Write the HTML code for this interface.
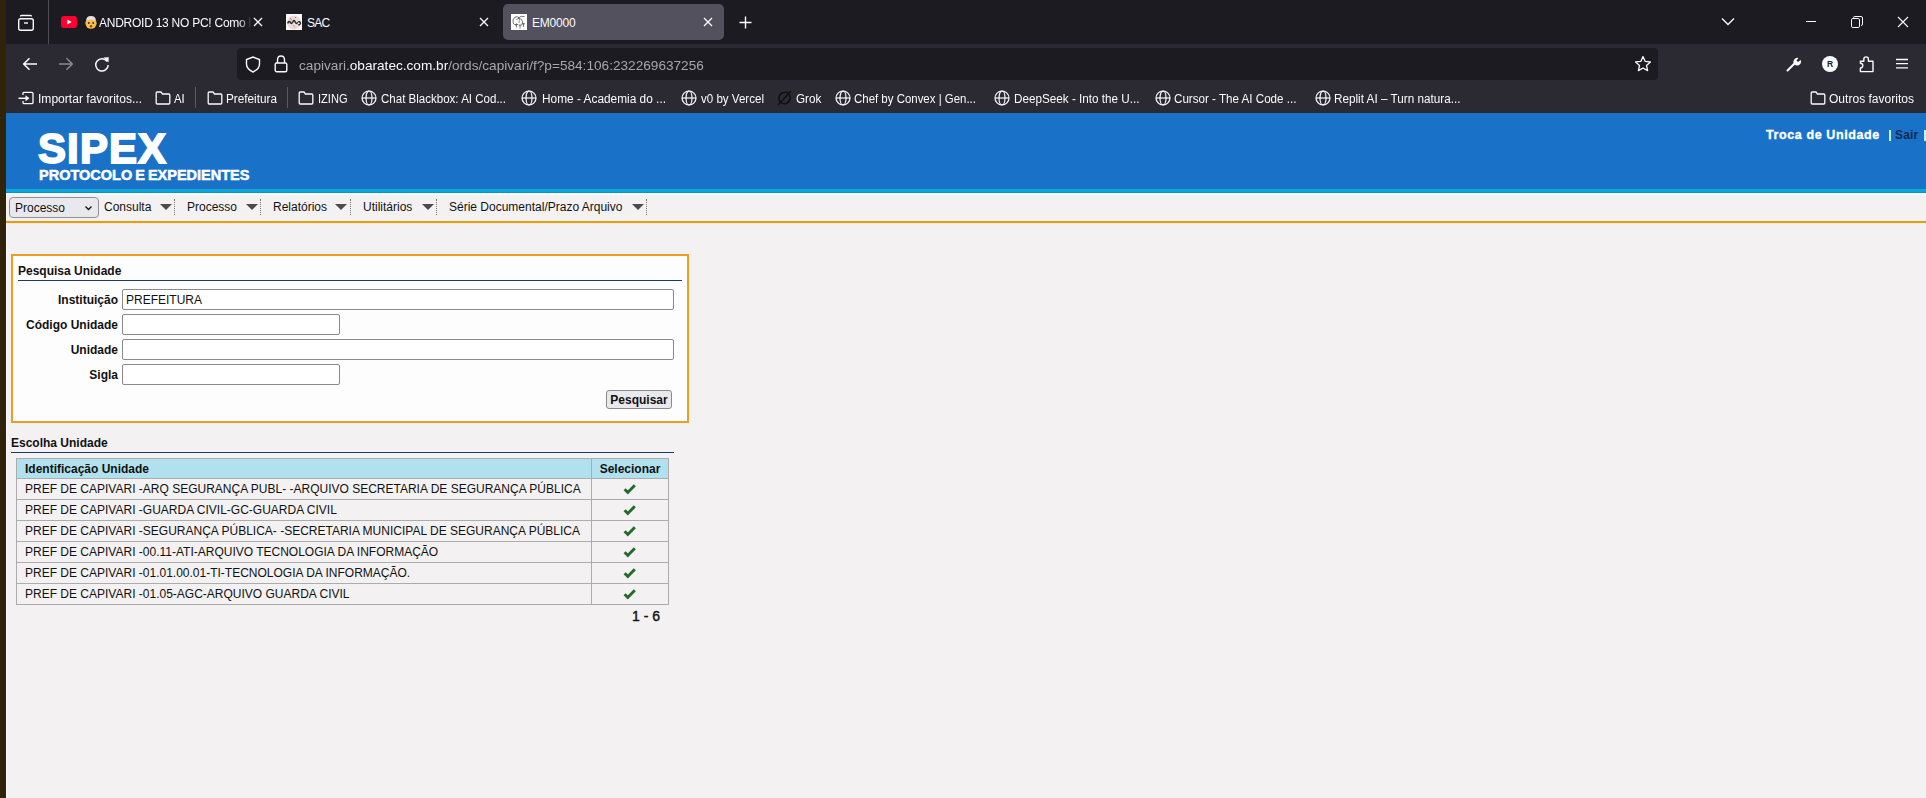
<!DOCTYPE html>
<html><head><meta charset="utf-8">
<style>
*{margin:0;padding:0;box-sizing:border-box}
html,body{width:1926px;height:798px;overflow:hidden;background:#f4f1f2;font-family:"Liberation Sans",sans-serif}
.a{position:absolute}
#lb{left:0;top:0;width:6px;height:798px;background:#2f240a}
#wl{left:6px;top:223px;width:1px;height:575px;background:#fcfcff}
#tabbar{left:6px;top:0;width:1920px;height:44px;background:#1c1b22}
#toolbar{left:6px;top:44px;width:1920px;height:40px;background:#2b2a33}
#bmbar{left:6px;top:84px;width:1920px;height:29px;background:#2b2a33}
.wt{color:#fbfbfe;font-size:13px;white-space:nowrap}
#url{left:237px;top:48px;width:1421px;height:32px;background:#1c1b22;border-radius:4px}
#hdr{left:6px;top:113px;width:1920px;height:76px;background:#1a72c8}
#cyan{left:6px;top:189px;width:1920px;height:4px;background:#0ba6da;border-bottom:1px solid #0c93bd}
#menu{left:6px;top:193px;width:1920px;height:28px;background:#f4f1f2;border-top:2px solid #f8fbfd}
#orange{left:6px;top:221px;width:1920px;height:2px;background:#d99d30;box-shadow:0 -1px 0 #fbeec6,0 1px 0 #fbeec6}
.mi{font-size:12px;color:#111;top:200px}
.tri{width:0;height:0;border-left:6px solid transparent;border-right:6px solid transparent;border-top:6px solid #4b4b4b;top:204px}
.dsep{width:0;border-left:1px dotted #777;top:199px;height:16px}
#box{left:11px;top:254px;width:678px;height:169px;border:2px solid #e99f26;background:#fdfdfd}
.lbl{font-size:12px;font-weight:bold;color:#111;text-align:right;white-space:nowrap}
.inp{border:1px solid #8a8a8a;border-radius:2px;background:#fff;height:21px}
.bl{height:1px;background:#1d3b5e}
table{border-collapse:collapse}
#tbl{left:16px;top:458px;width:653px}
#tbl td,#tbl th{border:1px solid #acacac;font-size:12px;height:21px;padding:0 0 0 8px;text-align:left;color:#111;white-space:nowrap}
#tbl th{background:#b1e1ee;font-weight:bold;height:20px}
#tbl td.c,#tbl th.c{text-align:center;padding:0;width:77px}
</style></head><body>
<div id="lb" class="a"></div>
<div id="tabbar" class="a"></div>
<div id="toolbar" class="a"></div>
<div id="bmbar" class="a"></div>
<div id="url" class="a"></div>

<!-- TAB BAR -->
<svg class="a" style="left:15px;top:13px" width="22" height="20" viewBox="0 0 22 20"><g fill="none" stroke="#fbfbfe" stroke-width="1.4"><path d="M5.5 3.5 Q5.5 2.5 6.5 2.5 H15.5 Q16.5 2.5 16.5 3.5"/><rect x="3.7" y="5.7" width="14.6" height="11.6" rx="2"/><path d="M9 10 H13"/></g></svg>
<div class="a" style="left:48px;top:0;width:1px;height:44px;background:#4e4d55"></div>
<svg class="a" style="left:61px;top:16px" width="16" height="12" viewBox="0 0 16 12"><rect width="16" height="12" rx="3" fill="#ff0033"/><path d="M6.3 3.5 L10.7 6 L6.3 8.5Z" fill="#fff"/></svg>
<svg class="a" style="left:84px;top:15px" width="14" height="14" viewBox="0 0 14 14"><circle cx="7" cy="8.2" r="5.6" fill="#f4c247"/><path d="M2.3 5.5 Q2 1 7 1 Q12 1 11.7 5.5 Q7 4.2 2.3 5.5Z" fill="#e8dce6"/><circle cx="4.8" cy="8" r="0.9" fill="#3a2410"/><circle cx="9.2" cy="8" r="0.9" fill="#3a2410"/><ellipse cx="7" cy="11.2" rx="1.2" ry="1.3" fill="#b8283a"/></svg>
<div class="a wt" style="left:99px;top:15px;font-size:12px;line-height:16px;letter-spacing:-0.25px;width:153px;overflow:hidden;-webkit-mask-image:linear-gradient(to right,#000 140px,transparent 153px)">ANDROID 13 NO PC! Como instalar</div>
<div class="a" style="left:249px;top:17px;width:1px;height:10px;background:#3a3940"></div>
<svg class="a" style="left:253px;top:17px" width="10" height="10" viewBox="0 0 10 10"><path d="M1 1 L9 9 M9 1 L1 9" stroke="#fbfbfe" stroke-width="1.3"/></svg>
<svg class="a" style="left:286px;top:14px" width="16" height="16" viewBox="0 0 16 16"><rect width="16" height="16" fill="#fafafa"/><circle cx="8" cy="8.5" r="7" fill="#ecdcdc"/><path d="M4 4 L6 6.5 M9 3 L10 4" stroke="#d06060" stroke-width="1"/><path d="M7 11 L9 13.5" stroke="#e8b0a0" stroke-width="1.5"/><path d="M1.8 9.5 Q2.5 6.5 4.3 8 Q5.3 10.8 6.8 8 Q8 4.8 9.2 8 Q10.3 10.5 12 8.5 Q13.5 6.8 14.4 9.2 Q13.5 11.5 12 10.5" fill="none" stroke="#262626" stroke-width="1.5"/><circle cx="12.6" cy="9.3" r="0.9" fill="#fff"/></svg>
<div class="a wt" style="left:307px;top:15px;font-size:12px;line-height:16px;letter-spacing:-0.8px">SAC</div>
<svg class="a" style="left:479px;top:17px" width="10" height="10" viewBox="0 0 10 10"><path d="M1 1 L9 9 M9 1 L1 9" stroke="#fbfbfe" stroke-width="1.3"/></svg>
<div class="a" style="left:503px;top:4px;width:221px;height:36px;background:#52515d;border-radius:5px"></div>
<svg class="a" style="left:511px;top:14px" width="16" height="16" viewBox="0 0 16 16"><rect width="16" height="16" fill="#fff"/><g fill="none" stroke="#555" stroke-width="0.8"><path d="M8.5 4 Q6 1.5 3.5 3.5 Q1.2 5.5 2.2 9 Q3 11 5.5 11.3"/><path d="M5.5 5.5 Q8 3 10.5 5.5 Q12.5 8 11 10.5 Q9.5 12 7.5 11"/><path d="M7 4 Q10 1.5 13.5 2.5"/><path d="M5.5 9.5 V13.5 M9 10.5 V14.5 M12.5 9 V13 M4 10.5 H7 M11 9.8 H14"/></g><path d="M8.5 5 L8 9" stroke="#999" stroke-width="1"/></svg>
<div class="a wt" style="left:532px;top:15px;font-size:12px;line-height:16px;letter-spacing:-0.2px">EM0000</div>
<svg class="a" style="left:703px;top:17px" width="10" height="10" viewBox="0 0 10 10"><path d="M1 1 L9 9 M9 1 L1 9" stroke="#fbfbfe" stroke-width="1.3"/></svg>
<svg class="a" style="left:739px;top:16px" width="13" height="13" viewBox="0 0 13 13"><path d="M6.5 0.5 V12.5 M0.5 6.5 H12.5" stroke="#fbfbfe" stroke-width="1.4"/></svg>
<svg class="a" style="left:1721px;top:17px" width="14" height="9" viewBox="0 0 14 9"><path d="M1 1.5 L7 7.5 L13 1.5" fill="none" stroke="#fbfbfe" stroke-width="1.3"/></svg>
<div class="a" style="left:1806px;top:21px;width:10px;height:1px;background:#fbfbfe"></div>
<svg class="a" style="left:1851px;top:16px" width="12" height="12" viewBox="0 0 12 12"><g fill="none" stroke="#fbfbfe" stroke-width="1"><rect x="0.5" y="2.5" width="8" height="9" rx="1.3"/><path d="M2.5 1.8 Q2.5 0.5 3.8 0.5 H10 Q11.5 0.5 11.5 2 V8 Q11.5 9.5 10.2 9.5"/></g></svg>
<svg class="a" style="left:1897px;top:16px" width="12" height="12" viewBox="0 0 12 12"><path d="M1 1 L11 11 M11 1 L1 11" stroke="#fbfbfe" stroke-width="1.1"/></svg>

<!-- TOOLBAR -->
<svg class="a" style="left:22px;top:57px" width="16" height="14" viewBox="0 0 16 14"><path d="M15 7 H2 M7.5 1.2 L1.7 7 L7.5 12.8" fill="none" stroke="#fbfbfe" stroke-width="1.5"/></svg>
<svg class="a" style="left:58px;top:57px" width="16" height="14" viewBox="0 0 16 14"><path d="M1 7 H14 M8.5 1.2 L14.3 7 L8.5 12.8" fill="none" stroke="#8a898f" stroke-width="1.5"/></svg>
<svg class="a" style="left:94px;top:56px" width="16" height="16" viewBox="0 0 16 16"><path d="M13.2 5.5 A6.2 6.2 0 1 0 14.2 9" fill="none" stroke="#fbfbfe" stroke-width="1.5"/><path d="M9.5 1.5 L14.8 1.2 L14.5 6.5Z" fill="#fbfbfe"/></svg>
<svg class="a" style="left:245px;top:56px" width="16" height="17" viewBox="0 0 16 17"><path d="M8 1 L14.5 3.5 V8 Q14.5 13 8 16 Q1.5 13 1.5 8 V3.5Z" fill="none" stroke="#fbfbfe" stroke-width="1.4"/></svg>
<svg class="a" style="left:274px;top:55px" width="14" height="18" viewBox="0 0 14 18"><path d="M3.5 8 V5 Q3.5 1 7 1 Q10.5 1 10.5 5 V8" fill="none" stroke="#fbfbfe" stroke-width="1.4"/><rect x="1.2" y="8" width="11.6" height="8.8" rx="1.5" fill="none" stroke="#fbfbfe" stroke-width="1.4"/></svg>
<div class="a" style="left:299px;top:57px;font-size:13px;line-height:18px;white-space:nowrap;transform:scaleX(1.048);transform-origin:0 0;color:#a8a7ad"><span>capivari.</span><span style="color:#fbfbfe">obaratec.com.br</span><span>/ords/capivari/f?p=584:106:232269637256</span></div>
<svg class="a" style="left:1634px;top:55px" width="18" height="18" viewBox="0 0 18 18"><path d="M9 1.6 L11.2 6.4 L16.4 6.9 L12.5 10.4 L13.6 15.6 L9 13 L4.4 15.6 L5.5 10.4 L1.6 6.9 L6.8 6.4Z" fill="none" stroke="#fbfbfe" stroke-width="1.3" stroke-linejoin="round"/></svg>
<svg class="a" style="left:1786px;top:56px" width="16" height="16" viewBox="0 0 16 16"><path d="M1.5 14.5 L9 7" stroke="#fbfbfe" stroke-width="2" stroke-linecap="round"/><path d="M8 8 A4 4 0 0 1 12.5 2 L10.5 4.5 L12 6 L14.8 4 A4 4 0 0 1 8.5 8.5Z" fill="#fbfbfe"/></svg>
<div class="a" style="left:1822px;top:56px;width:16px;height:16px;border-radius:50%;background:#fbfbfe;color:#1c1b22;font-weight:bold;font-size:8.5px;line-height:17px;text-align:center">R</div>
<svg class="a" style="left:1859px;top:55px" width="16" height="18" viewBox="0 0 16 18"><path d="M1.4 6.2 H4.8 V4.2 A2.3 2.3 0 0 1 9.4 4.2 V6.2 H14 V16.6 H1.4 V13 A2.4 2.4 0 0 0 1.4 8.2 Z" fill="none" stroke="#fbfbfe" stroke-width="1.4" stroke-linejoin="round"/></svg>
<svg class="a" style="left:1895px;top:58px" width="14" height="12" viewBox="0 0 14 12"><path d="M1 1.5 H13 M1 5.7 H13 M1 9.9 H13" stroke="#fbfbfe" stroke-width="1.3"/></svg>

<!-- BOOKMARKS -->
<svg class="a" style="left:18px;top:91px" width="16" height="14" viewBox="0 0 16 14"><path d="M5 4 V2.5 Q5 1.3 6.3 1.3 H13.7 Q15 1.3 15 2.5 V11.5 Q15 12.7 13.7 12.7 H6.3 Q5 12.7 5 11.5 V10" fill="none" stroke="#fbfbfe" stroke-width="1.3"/><path d="M0.5 7.3 H8" stroke="#fbfbfe" stroke-width="1.5"/><path d="M7.5 4.3 L11.5 7.3 L7.5 10.3Z" fill="#fbfbfe"/></svg>
<div class="a wt" style="left:38px;top:91px;font-size:12px;line-height:16px;transform:scaleX(1.006);transform-origin:0 0">Importar favoritos...</div>
<svg class="a" style="left:155px;top:91px" width="16" height="14" viewBox="0 0 16 14"><path d="M1.2 2 Q1.2 1 2.2 1 H6 L7.5 3 H13.8 Q14.8 3 14.8 4 V12 Q14.8 13 13.8 13 H2.2 Q1.2 13 1.2 12Z" fill="none" stroke="#fbfbfe" stroke-width="1.3" stroke-linejoin="round"/></svg>
<div class="a wt" style="left:174px;top:91px;font-size:12px;line-height:16px;transform:scaleX(0.944);transform-origin:0 0">AI</div>
<svg class="a" style="left:207px;top:91px" width="16" height="14" viewBox="0 0 16 14"><path d="M1.2 2 Q1.2 1 2.2 1 H6 L7.5 3 H13.8 Q14.8 3 14.8 4 V12 Q14.8 13 13.8 13 H2.2 Q1.2 13 1.2 12Z" fill="none" stroke="#fbfbfe" stroke-width="1.3" stroke-linejoin="round"/></svg>
<div class="a wt" style="left:226px;top:91px;font-size:12px;line-height:16px;transform:scaleX(0.980);transform-origin:0 0">Prefeitura</div>
<svg class="a" style="left:298px;top:91px" width="16" height="14" viewBox="0 0 16 14"><path d="M1.2 2 Q1.2 1 2.2 1 H6 L7.5 3 H13.8 Q14.8 3 14.8 4 V12 Q14.8 13 13.8 13 H2.2 Q1.2 13 1.2 12Z" fill="none" stroke="#fbfbfe" stroke-width="1.3" stroke-linejoin="round"/></svg>
<div class="a wt" style="left:318px;top:91px;font-size:12px;line-height:16px;transform:scaleX(0.922);transform-origin:0 0">IZING</div>
<svg class="a" style="left:361px;top:90px" width="16" height="16" viewBox="0 0 16 16"><g fill="none" stroke="#fbfbfe" stroke-width="1.2"><circle cx="8" cy="8" r="7"/><ellipse cx="8" cy="8" rx="3" ry="7"/><path d="M1 8 H15"/></g></svg>
<div class="a wt" style="left:381px;top:91px;font-size:12px;line-height:16px;transform:scaleX(0.961);transform-origin:0 0">Chat Blackbox: AI Cod...</div>
<svg class="a" style="left:521px;top:90px" width="16" height="16" viewBox="0 0 16 16"><g fill="none" stroke="#fbfbfe" stroke-width="1.2"><circle cx="8" cy="8" r="7"/><ellipse cx="8" cy="8" rx="3" ry="7"/><path d="M1 8 H15"/></g></svg>
<div class="a wt" style="left:542px;top:91px;font-size:12px;line-height:16px;transform:scaleX(0.989);transform-origin:0 0">Home - Academia do ...</div>
<svg class="a" style="left:681px;top:90px" width="16" height="16" viewBox="0 0 16 16"><g fill="none" stroke="#fbfbfe" stroke-width="1.2"><circle cx="8" cy="8" r="7"/><ellipse cx="8" cy="8" rx="3" ry="7"/><path d="M1 8 H15"/></g></svg>
<div class="a wt" style="left:701px;top:91px;font-size:12px;line-height:16px;transform:scaleX(0.964);transform-origin:0 0">v0 by Vercel</div>
<svg class="a" style="left:777px;top:90px" width="15" height="16" viewBox="0 0 15 16"><path d="M3 12 Q0 6 5 3 Q9 1 12 4 M12 4 Q15 10 10 13 Q6 15 3 12 M1 15 L14 1" fill="none" stroke="#111" stroke-width="1.6"/></svg>
<div class="a wt" style="left:796px;top:91px;font-size:12px;line-height:16px;transform:scaleX(0.976);transform-origin:0 0">Grok</div>
<svg class="a" style="left:835px;top:90px" width="16" height="16" viewBox="0 0 16 16"><g fill="none" stroke="#fbfbfe" stroke-width="1.2"><circle cx="8" cy="8" r="7"/><ellipse cx="8" cy="8" rx="3" ry="7"/><path d="M1 8 H15"/></g></svg>
<div class="a wt" style="left:854px;top:91px;font-size:12px;line-height:16px;transform:scaleX(0.954);transform-origin:0 0">Chef by Convex | Gen...</div>
<svg class="a" style="left:994px;top:90px" width="16" height="16" viewBox="0 0 16 16"><g fill="none" stroke="#fbfbfe" stroke-width="1.2"><circle cx="8" cy="8" r="7"/><ellipse cx="8" cy="8" rx="3" ry="7"/><path d="M1 8 H15"/></g></svg>
<div class="a wt" style="left:1014px;top:91px;font-size:12px;line-height:16px;transform:scaleX(0.975);transform-origin:0 0">DeepSeek - Into the U...</div>
<svg class="a" style="left:1155px;top:90px" width="16" height="16" viewBox="0 0 16 16"><g fill="none" stroke="#fbfbfe" stroke-width="1.2"><circle cx="8" cy="8" r="7"/><ellipse cx="8" cy="8" rx="3" ry="7"/><path d="M1 8 H15"/></g></svg>
<div class="a wt" style="left:1174px;top:91px;font-size:12px;line-height:16px;transform:scaleX(0.968);transform-origin:0 0">Cursor - The AI Code ...</div>
<svg class="a" style="left:1315px;top:90px" width="16" height="16" viewBox="0 0 16 16"><g fill="none" stroke="#fbfbfe" stroke-width="1.2"><circle cx="8" cy="8" r="7"/><ellipse cx="8" cy="8" rx="3" ry="7"/><path d="M1 8 H15"/></g></svg>
<div class="a wt" style="left:1334px;top:91px;font-size:12px;line-height:16px;transform:scaleX(0.977);transform-origin:0 0">Replit AI – Turn natura...</div>
<svg class="a" style="left:1810px;top:91px" width="16" height="14" viewBox="0 0 16 14"><path d="M1.2 2 Q1.2 1 2.2 1 H6 L7.5 3 H13.8 Q14.8 3 14.8 4 V12 Q14.8 13 13.8 13 H2.2 Q1.2 13 1.2 12Z" fill="none" stroke="#fbfbfe" stroke-width="1.3" stroke-linejoin="round"/></svg>
<div class="a wt" style="left:1829px;top:91px;font-size:12px;line-height:16px;transform:scaleX(1.004);transform-origin:0 0">Outros favoritos</div>
<div class="a" style="left:195px;top:87px;width:1px;height:21px;background:#5b5a63"></div>
<div class="a" style="left:287px;top:87px;width:1px;height:21px;background:#5b5a63"></div>

<div id="hdr" class="a"></div>
<div id="cyan" class="a"></div>
<div id="menu" class="a"></div>
<div id="orange" class="a"></div>


<!-- MENU -->
<div class="a" style="left:9px;top:197px;width:90px;height:21px;border:1px solid #8f8f9d;border-radius:4px;background:#e9e9ed"></div>
<div class="a mi" style="left:15px;top:201px">Processo</div>
<svg class="a" style="left:84px;top:205px" width="9" height="6" viewBox="0 0 9 6"><path d="M1.5 1.5 L4.5 4.5 L7.5 1.5" fill="none" stroke="#111" stroke-width="1.3"/></svg>
<div class="a mi" style="left:104px">Consulta</div>
<div class="a tri" style="left:160px"></div>
<div class="a dsep" style="left:174px"></div>
<div class="a mi" style="left:187px">Processo</div>
<div class="a tri" style="left:246px"></div>
<div class="a dsep" style="left:260px"></div>
<div class="a mi" style="left:273px">Relatórios</div>
<div class="a tri" style="left:335px"></div>
<div class="a dsep" style="left:350px"></div>
<div class="a mi" style="left:363px">Utilitários</div>
<div class="a tri" style="left:422px"></div>
<div class="a dsep" style="left:436px"></div>
<div class="a mi" style="left:449px">Série Documental/Prazo Arquivo</div>
<div class="a tri" style="left:632px"></div>
<div class="a dsep" style="left:646px"></div>
<div id="wl" class="a"></div>
<!-- content -->
<div class="a" style="left:38px;top:128px;color:#fff;font-weight:bold;font-size:42px;line-height:42px;letter-spacing:1.1px;-webkit-text-stroke:1.8px #fff">SIPEX</div>
<div class="a" style="left:39px;top:167px;color:#fff;font-weight:bold;font-size:14.5px;line-height:16px;letter-spacing:0px;word-spacing:-1px;-webkit-text-stroke:0.5px #fff">PROTOCOLO E EXPEDIENTES</div>
<div class="a" style="left:1766px;top:128px;color:#fff;font-weight:bold;font-size:12.5px;line-height:15px;letter-spacing:0.6px;-webkit-text-stroke:0.35px #fff">Troca de Unidade</div>
<div class="a" style="left:1889px;top:130px;width:2px;height:11px;background:#c8f0ff"></div>
<div class="a" style="left:1895px;top:128px;color:#0d2a52;font-weight:bold;font-size:12px;line-height:15px;letter-spacing:0.2px">Sair</div>
<div class="a" style="left:1924px;top:130px;width:2px;height:11px;background:#c8f0ff"></div>

<div id="box" class="a"></div>
<div class="a lbl" style="left:18px;top:264px">Pesquisa Unidade</div>
<div class="a bl" style="left:18px;top:280px;width:664px"></div>
<div class="a lbl" style="left:20px;width:98px;top:293px">Instituição</div>
<div class="a lbl" style="left:20px;width:98px;top:318px">Código Unidade</div>
<div class="a lbl" style="left:20px;width:98px;top:343px">Unidade</div>
<div class="a lbl" style="left:20px;width:98px;top:368px">Sigla</div>
<div class="a inp" style="left:122px;top:289px;width:552px;font-size:12px;padding:3px 0 0 3px;color:#111">PREFEITURA</div>
<div class="a inp" style="left:122px;top:314px;width:218px"></div>
<div class="a inp" style="left:122px;top:339px;width:552px"></div>
<div class="a inp" style="left:122px;top:364px;width:218px"></div>
<div class="a" style="left:606px;top:390px;width:66px;height:19px;border:1px solid #8a8a8a;border-radius:3px;background:#e9e9ed;font-size:12px;font-weight:bold;color:#111;text-align:center;line-height:19px">Pesquisar</div>

<div class="a lbl" style="left:11px;top:436px">Escolha Unidade</div>
<div class="a bl" style="left:11px;top:452px;width:663px"></div>

<table id="tbl" class="a">
<tr><th>Identificação Unidade</th><th class="c">Selecionar</th></tr>
<tr><td>PREF DE CAPIVARI -ARQ SEGURANÇA PUBL- -ARQUIVO SECRETARIA DE SEGURANÇA PÚBLICA</td><td class="c"><svg width="13" height="11" viewBox="0 0 13 11" style="display:block;margin:0 auto;position:relative;left:-1px"><path d="M1.6 5.3 L4.8 8.4 L11.8 1.3" fill="none" stroke="#236b2c" stroke-width="2.9"/></svg></td></tr>
<tr><td>PREF DE CAPIVARI -GUARDA CIVIL-GC-GUARDA CIVIL</td><td class="c"><svg width="13" height="11" viewBox="0 0 13 11" style="display:block;margin:0 auto;position:relative;left:-1px"><path d="M1.6 5.3 L4.8 8.4 L11.8 1.3" fill="none" stroke="#236b2c" stroke-width="2.9"/></svg></td></tr>
<tr><td>PREF DE CAPIVARI -SEGURANÇA PÚBLICA- -SECRETARIA MUNICIPAL DE SEGURANÇA PÚBLICA</td><td class="c"><svg width="13" height="11" viewBox="0 0 13 11" style="display:block;margin:0 auto;position:relative;left:-1px"><path d="M1.6 5.3 L4.8 8.4 L11.8 1.3" fill="none" stroke="#236b2c" stroke-width="2.9"/></svg></td></tr>
<tr><td>PREF DE CAPIVARI -00.11-ATI-ARQUIVO TECNOLOGIA DA INFORMAÇÃO</td><td class="c"><svg width="13" height="11" viewBox="0 0 13 11" style="display:block;margin:0 auto;position:relative;left:-1px"><path d="M1.6 5.3 L4.8 8.4 L11.8 1.3" fill="none" stroke="#236b2c" stroke-width="2.9"/></svg></td></tr>
<tr><td>PREF DE CAPIVARI -01.01.00.01-TI-TECNOLOGIA DA INFORMAÇÃO.</td><td class="c"><svg width="13" height="11" viewBox="0 0 13 11" style="display:block;margin:0 auto;position:relative;left:-1px"><path d="M1.6 5.3 L4.8 8.4 L11.8 1.3" fill="none" stroke="#236b2c" stroke-width="2.9"/></svg></td></tr>
<tr><td>PREF DE CAPIVARI -01.05-AGC-ARQUIVO GUARDA CIVIL</td><td class="c"><svg width="13" height="11" viewBox="0 0 13 11" style="display:block;margin:0 auto;position:relative;left:-1px"><path d="M1.6 5.3 L4.8 8.4 L11.8 1.3" fill="none" stroke="#236b2c" stroke-width="2.9"/></svg></td></tr>
</table>
<div class="a" style="left:632px;top:608px;font-size:14px;line-height:16px;-webkit-text-stroke:0.4px #111;color:#111">1 - 6</div>
</body></html>
